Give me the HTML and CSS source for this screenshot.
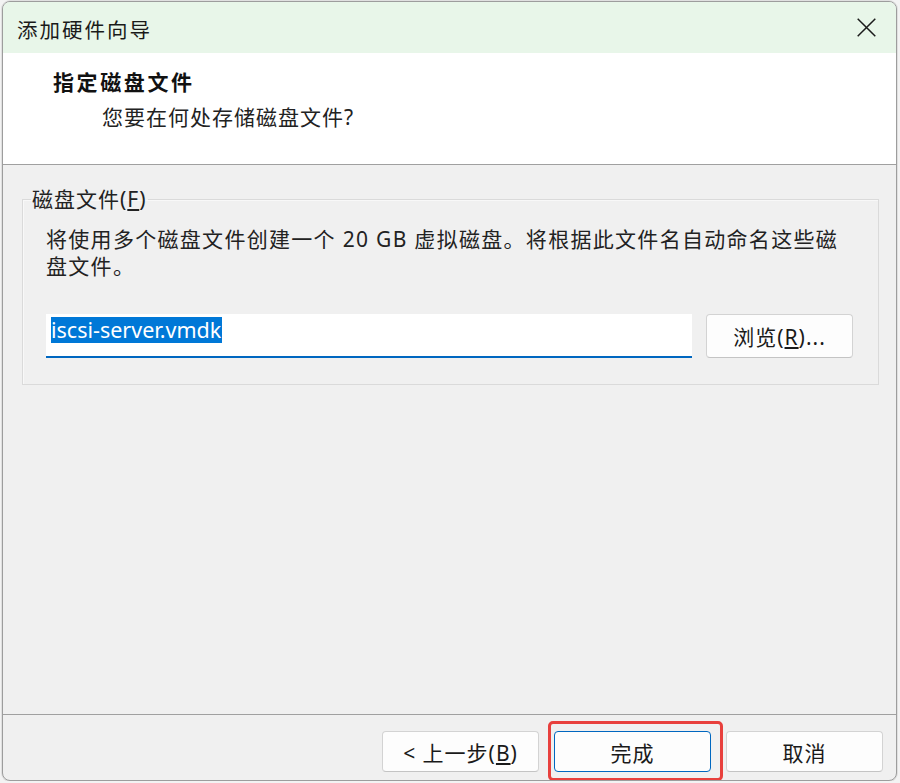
FILE: index.html
```html
<!DOCTYPE html>
<html lang="zh-CN">
<head>
    <meta charset="UTF-8">
    <title>添加硬件向导</title>
    <link rel="stylesheet" href="styles.css">
</head>
<body>
    <div class="wizard">
        <!-- Title bar -->
        <div class="titlebar">
            <span class="titlebar-text">添加硬件向导</span>
            <button class="close-btn" title="关闭">
                <svg width="19" height="19" viewBox="0 0 19 19">
                    <path d="M0.7 0.7 L18.3 18.3 M18.3 0.7 L0.7 18.3" stroke="#1b1b1b" stroke-width="1.5" fill="none"/>
                </svg>
            </button>
        </div>

        <!-- Page header -->
        <div class="page-header">
            <div class="page-title">指定磁盘文件</div>
            <div class="page-subtitle">您要在何处存储磁盘文件?</div>
        </div>

        <!-- Page body -->
        <div class="page-body">
            <fieldset class="groupbox">
                <legend class="groupbox-label">磁盘文件(<u>F</u>)</legend>
                <div class="groupbox-body">
                    <p class="hint">将使用多个磁盘文件创建一个 20 GB 虚拟磁盘。将根据此文件名自动命名这些磁盘文件。</p>
                    <div class="file-row">
                        <div class="text-field"><span class="selection">iscsi-server.vmdk</span></div>
                        <button class="btn btn-browse">浏览(<u>R</u>)...</button>
                    </div>
                </div>
            </fieldset>
        </div>

        <!-- Wizard buttons -->
        <div class="footer">
            <button class="btn btn-footer">&lt; 上一步(<u>B</u>)</button>
            <button class="btn btn-footer btn-default">完成<span class="mark"></span></button>
            <button class="btn btn-footer">取消</button>
        </div>
    </div>
</body>
</html>
```

FILE: styles.css
```css
body {
    margin: 0;
    background-color: #f3f3f3;
    font-family: "Noto Sans", "Noto Sans CJK SC", sans-serif;
    color: #1a1a1a;
}

.wizard {
    margin: 1px 0 0 2px;
    width: 893px;
    height: 778px;
    border: 1px solid #9d9d9d;
    border-radius: 8px;
    overflow: hidden;
    display: flex;
    flex-direction: column;
    background-color: #f0f0f0;
    box-shadow: 0 0 0 1px rgba(0, 0, 0, 0.08);
}

.titlebar {
    height: 51px;
    flex: none;
    display: flex;
    align-items: flex-start;
    justify-content: space-between;
    background-color: #e8f6e9;
    padding: 0 20px 0 14px;
}

.titlebar-text {
    font-size: 20.5px;
    letter-spacing: 2px;
    line-height: 27px;
    margin-top: 15px;
    color: #1a1a1a;
}

.close-btn {
    border: none;
    background: none;
    padding: 0;
    margin-top: 16px;
    width: 19px;
    height: 19px;
}

.close-btn svg {
    display: block;
}

.page-header {
    flex: none;
    background-color: #fff;
    border-bottom: 1px solid #a0a0a0;
    padding: 16px 0 33px 50px;
    height: 62px;
}

.page-title {
    font-size: 21px;
    font-weight: bold;
    letter-spacing: 2.6px;
    line-height: 27px;
    color: #111;
}

.page-subtitle {
    font-size: 21px;
    letter-spacing: 1px;
    line-height: 27px;
    margin-top: 8px;
    padding-left: 49px;
    color: #222;
}

.page-body {
    flex: 1;
    padding: 21px 17px 0 19px;
}

.groupbox {
    margin: 0;
    padding: 0;
    border: 1px solid #dadada;
    box-shadow: inset 1px 1px 0 #f8f8f8;
}

.groupbox-label {
    margin-left: 8px;
    padding: 0 1px;
    font-size: 21px;
    letter-spacing: 1px;
    line-height: 27px;
    color: #222;
}

.groupbox-body {
    padding: 13px 25px 26px 23px;
}

.hint {
    margin: 0 14px 0 0;
    font-size: 21px;
    letter-spacing: 1.3px;
    line-height: 27px;
    color: #222;
}

.file-row {
    display: flex;
    gap: 14px;
    margin-top: 34px;
}

.text-field {
    flex: 1;
    background-color: #fff;
    border-bottom: 2px solid #0067c0;
    padding: 3px 0 0 5px;
    height: 39px;
}

.selection {
    display: inline-block;
    background-color: #0078d7;
    color: #fff;
    font-size: 21.5px;
    line-height: 26px;
    padding-right: 1px;
}

.btn {
    font-family: inherit;
    font-size: 21px;
    letter-spacing: 1px;
    color: #1a1a1a;
    background-color: #fdfdfd;
    border: 1px solid #d3d3d3;
    border-bottom-color: #c4c4c4;
    border-radius: 4px;
    padding: 0;
}

.btn-browse {
    width: 147px;
    height: 44px;
}

.footer {
    flex: none;
    height: 66px;
    border-top: 1px solid #a0a0a0;
    display: flex;
    justify-content: flex-end;
    align-items: flex-start;
    gap: 15px;
    padding: 16px 13px 0 0;
    box-sizing: border-box;
}

.btn-footer {
    width: 157px;
    height: 41px;
}

.btn-default {
    position: relative;
    border-color: #0067c0;
}

/* red annotation frame drawn around the finish button */
.btn-default .mark {
    position: absolute;
    left: -7px;
    right: -13px;
    top: -11px;
    bottom: -10px;
    border: 3px solid #e8403d;
    border-radius: 5px;
}
```
